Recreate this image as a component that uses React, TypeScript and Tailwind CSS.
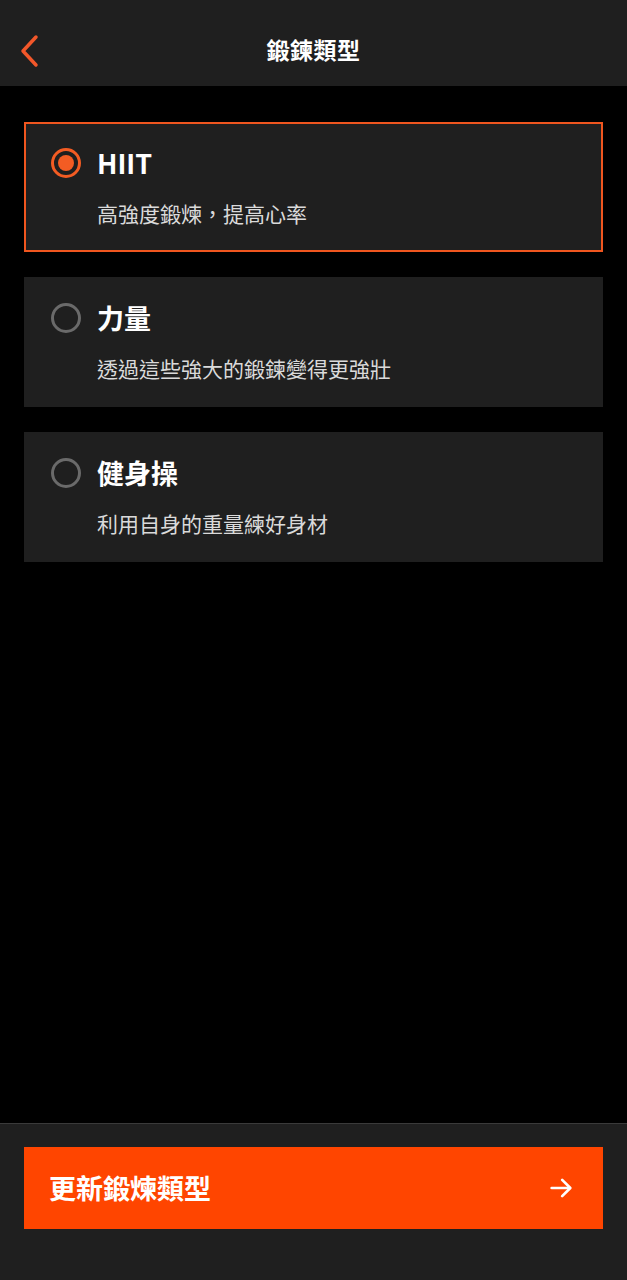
import { useState } from 'react'

const types = [
  { id: 'hiit', title: 'HIIT', desc: '高強度鍛煉，提高心率' },
  { id: 'strength', title: '力量', desc: '透過這些強大的鍛鍊變得更強壯' },
  { id: 'calisthenics', title: '健身操', desc: '利用自身的重量練好身材' },
]

const font = { fontFamily: '"Noto Sans CJK TC", "Noto Sans", sans-serif' }

function Radio({ checked }: { checked: boolean }) {
  if (checked) {
    return (
      <span className="flex h-[30px] w-[30px] shrink-0 items-center justify-center rounded-full border-[3px] border-[#f35c23]">
        <span className="h-[16px] w-[16px] rounded-full bg-[#f35c23]" />
      </span>
    )
  }
  return <span className="h-[30px] w-[30px] shrink-0 rounded-full border-[3px] border-[#6a6a6a]" />
}

export default function App() {
  const [selected, setSelected] = useState('hiit')

  return (
    <div className="flex h-[1280px] flex-col bg-black text-white" style={font}>
      <header className="relative flex h-[86px] shrink-0 items-center justify-center bg-[#1f1f1f] pt-[12px]">
        <button className="absolute left-[18px] top-[34px]">
          <svg width="24" height="34" viewBox="0 0 24 34" fill="none">
            <path d="M18 3 L5 17 L18 31" stroke="#f2572a" strokeWidth="3.5" strokeLinecap="round" strokeLinejoin="round" />
          </svg>
        </button>
        <h1 className="text-[23px] font-bold leading-[32px] tracking-[0.5px]">鍛鍊類型</h1>
      </header>

      <main className="flex flex-1 flex-col gap-[25px] px-[24px] pt-[36px]">
        {types.map((t) => {
          const active = selected === t.id
          return (
            <div
              key={t.id}
              onClick={() => setSelected(t.id)}
              className={
                active
                  ? 'flex h-[130px] flex-col border-2 border-[#f0561f] bg-[#1f1f1f] pl-[25px] pt-[22px]'
                  : 'flex h-[130px] flex-col border-2 border-[#1f1f1f] bg-[#1f1f1f] pl-[25px] pt-[22px]'
              }
            >
              <div className="flex items-center gap-[16px]">
                <Radio checked={active} />
                <span className="text-[27px] font-bold leading-[34px]">{t.title}</span>
              </div>
              <p className="ml-[46px] mt-[18px] text-[21px] leading-[30px] text-[#dadada]">{t.desc}</p>
            </div>
          )
        })}
      </main>

      <footer className="shrink-0 border-t border-[#3a3a3a] bg-[#1f1f1f] px-[24px] pb-[51px] pt-[23px]">
        <button className="flex h-[82px] w-full items-center justify-between bg-[#ff4500] pl-[25px] pr-[28px]">
          <span className="text-[27px] font-bold leading-[36px]">更新鍛煉類型</span>
          <svg width="28" height="28" viewBox="0 0 24 24" fill="none" stroke="white" strokeWidth="2.3" strokeLinecap="round" strokeLinejoin="round">
            <path d="M4 12h15" />
            <path d="M13 5l7 7-7 7" />
          </svg>
        </button>
      </footer>
    </div>
  )
}
